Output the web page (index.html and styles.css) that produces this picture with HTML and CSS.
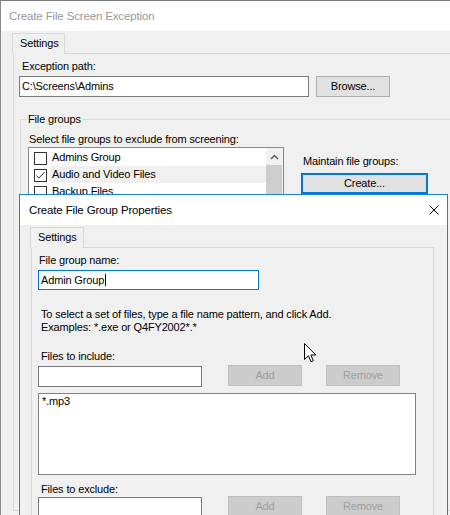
FILE: index.html
```html
<!DOCTYPE html>
<html>
<head>
<meta charset="utf-8">
<title>Create File Screen Exception</title>
<link rel="stylesheet" href="styles.css">
</head>
<body>
<div class="win back">
  <div class="titlebar">Create File Screen Exception</div>
  <div class="tabstrip"><div class="tab">Settings</div></div>
  <div class="panel back-panel">
    <div class="lbl path-lbl">Exception path:</div>
    <div class="path-row">
      <div class="textbox path-box">C:\Screens\Admins</div>
      <div class="btn browse">Browse...</div>
    </div>
    <div class="group">
      <div class="legend">File groups</div>
      <div class="lbl select-lbl">Select file groups to exclude from screening:</div>
      <div class="groups-row">
        <div class="listbox groups-list">
          <div class="items">
            <div class="item"><span class="check"></span><span class="item-text">Admins Group</span></div>
            <div class="item sel"><span class="check"><svg width="11" height="11" viewBox="0 0 11 11"><path d="M1.5 5.5 L4 8 L9.5 2" fill="none" stroke="#333" stroke-width="1"/></svg></span><span class="item-text">Audio and Video Files</span></div>
            <div class="item"><span class="check"></span><span class="item-text">Backup Files</span></div>
          </div>
          <div class="scrollbar">
            <div class="sb-arrow"><svg width="9" height="6" viewBox="0 0 9 6"><path d="M1 5 L4.5 1.5 L8 5" fill="none" stroke="#606060" stroke-width="1.5"/></svg></div>
            <div class="sb-thumb"></div>
          </div>
        </div>
        <div class="maintain">
          <div class="lbl">Maintain file groups:</div>
          <div class="btn create">Create...</div>
        </div>
      </div>
    </div>
  </div>
</div>

<div class="win dialog">
  <div class="titlebar">
    <span>Create File Group Properties</span>
    <svg class="close" width="10" height="10" viewBox="0 0 10 10"><path d="M0.5 0.5 L9.5 9.5 M9.5 0.5 L0.5 9.5" stroke="#000" stroke-width="1"/></svg>
  </div>
  <div class="tabstrip"><div class="tab">Settings</div></div>
  <div class="panel front-panel">
    <div class="lbl name-lbl">File group name:</div>
    <div class="textbox name-box">Admin Group<span class="caret"></span></div>
    <div class="lbl desc">To select a set of files, type a file name pattern, and click Add.<br>Examples: *.exe or Q4FY2002*.*</div>
    <div class="lbl inc-lbl">Files to include:</div>
    <div class="file-row">
      <div class="textbox file-box"></div>
      <div class="btn disabled add">Add</div>
      <div class="btn disabled remove">Remove</div>
    </div>
    <div class="listbox inc-list">*.mp3</div>
    <div class="lbl exc-lbl">Files to exclude:</div>
    <div class="file-row exc-row">
      <div class="textbox file-box"></div>
      <div class="btn disabled add">Add</div>
      <div class="btn disabled remove">Remove</div>
    </div>
  </div>
</div>

<svg class="cursor" width="13" height="20" viewBox="0 0 13 20"><path d="M0.5 0.5 L0.5 16.5 L4.5 12.8 L7 18.8 L9.3 17.8 L6.9 12 L11.8 12 Z" fill="#fff" stroke="#000" stroke-width="1" stroke-linejoin="miter"/></svg>
</body>
</html>
```

FILE: styles.css
```css
html, body {
  margin: 0;
  padding: 0;
}
body {
  width: 450px;
  height: 515px;
  overflow: hidden;
  position: relative;
  background: #f0f0f0;
  font-family: "Liberation Sans", Arial, sans-serif;
  font-size: 11px;
  letter-spacing: -0.15px;
  color: #000;
}
.back {
  width: 450px;
  height: 515px;
  box-sizing: border-box;
  border-top: 1px solid #7a7a7a;
  border-left: 1px solid #8a8a8a;
  background: #f0f0f0;
}
.titlebar {
  height: 30px;
  background: #fff;
  display: flex;
  align-items: center;
  justify-content: space-between;
  font-size: 11.5px;
  white-space: nowrap;
}
.back .titlebar {
  padding-left: 8px;
  color: #999;
}
.tabstrip {
  display: flex;
  padding-top: 2px;
}
.tab {
  position: relative;
  z-index: 1;
  box-sizing: border-box;
  height: 21px;
  margin-bottom: -1px;
  border: 1px solid #d9d9d9;
  border-bottom: none;
  background: #f0f0f0;
  padding: 1px 0 0 7px;
  line-height: 16px;
}
.back .tab {
  margin-left: 11px;
  width: 53px;
}
.panel {
  box-sizing: border-box;
  border: 1px solid #d9d9d9;
}
.back-panel {
  margin-left: 12px;
  height: 458px;
  border-right: none;
}
.lbl {
  line-height: 13px;
  white-space: nowrap;
}
.path-lbl {
  margin: 6px 0 0 8px;
}
.path-row {
  display: flex;
  margin: 3px 0 0 5px;
}
.textbox {
  box-sizing: border-box;
  height: 21px;
  border: 1px solid #7a7a7a;
  background: #fff;
  padding: 0 2px;
  line-height: 18px;
  white-space: nowrap;
}
.path-box {
  width: 290px;
}
.btn {
  box-sizing: border-box;
  height: 21px;
  border: 1px solid #adadad;
  background: #e1e1e1;
  text-align: center;
  line-height: 19px;
  white-space: nowrap;
}
.browse {
  width: 74px;
  margin-left: 7px;
}
.group {
  margin: 22px 0 0 6px;
  border: 1px solid #dcdcdc;
  border-right: none;
  border-bottom: none;
  height: 300px;
}
.legend {
  display: block;
  width: max-content;
  margin: -7px 0 0 6px;
  padding: 0 1px;
  background: #f0f0f0;
  line-height: 13px;
}
.select-lbl {
  margin: 7px 0 0 8px;
}
.groups-row {
  display: flex;
  align-items: flex-start;
  margin: 1px 0 0 7px;
}
.listbox {
  box-sizing: border-box;
  border: 1px solid #828790;
  background: #fff;
}
.groups-list {
  width: 256px;
  height: 70px;
  display: flex;
}
.items {
  flex: 1;
  padding-top: 1px;
}
.item {
  display: flex;
  height: 17px;
  line-height: 17px;
  white-space: nowrap;
}
.check {
  flex: none;
  box-sizing: border-box;
  width: 13px;
  height: 13px;
  border: 1px solid #333;
  background: #fff;
  margin: 3px 0 0 5px;
  display: flex;
  align-items: center;
  justify-content: center;
}
.item-text {
  flex: 1;
  margin-left: 3px;
  padding-left: 2px;
}
.sel .item-text {
  background: #f0f0f0;
}
.scrollbar {
  width: 17px;
  background: #f0f0f0;
  display: flex;
  flex-direction: column;
}
.sb-arrow {
  height: 17px;
  display: flex;
  align-items: center;
  justify-content: center;
}
.sb-thumb {
  flex: 1;
  background: #cdcdcd;
  margin-right: 1px;
}
.maintain {
  margin-left: 17px;
}
.maintain .lbl {
  margin-top: 8px;
  padding-left: 2px;
}
.create {
  width: 127px;
  margin-top: 5px;
  border: 2px solid #0078d7;
  line-height: 17px;
}

.dialog {
  position: absolute;
  left: 19px;
  top: 194px;
  width: 429px;
  height: 321px;
  box-sizing: border-box;
  border: 1px solid #1883d7;
  border-bottom: none;
  background: #f0f0f0;
}
.dialog .titlebar {
  padding-left: 9px;
}
.close {
  margin-right: 8px;
}
.dialog .tab {
  margin-left: 10px;
  width: 54px;
}
.front-panel {
  margin-left: 11px;
  width: 403px;
  height: 268px;
  border-bottom: none;
}
.name-lbl {
  margin: 6px 0 0 7px;
}
.name-box {
  width: 221px;
  height: 20px;
  margin: 3px 0 0 6px;
  border-color: #0078d7;
  line-height: 18px;
}
.caret {
  display: inline-block;
  width: 1px;
  height: 12px;
  margin-left: 1px;
  background: #000;
  vertical-align: -2px;
}
.desc {
  margin: 18px 0 0 9px;
}
.inc-lbl {
  margin: 16px 0 0 9px;
}
.file-row {
  display: flex;
  align-items: flex-start;
  height: 22px;
  margin: 2px 0 0 6px;
}
.exc-row {
  margin-top: 0;
  height: 19px;
}
.file-box {
  width: 164px;
  margin-top: 1px;
}
.exc-row .file-box {
  height: 18px;
  border-bottom: none;
}
.exc-row .btn {
  height: 19px;
  border-bottom: none;
}
.disabled {
  background: #cccccc;
  border-color: #bfbfbf;
  color: #a0a0a0;
}
.add {
  width: 74px;
  margin-left: 26px;
}
.remove {
  width: 74px;
  margin-left: 24px;
}
.inc-list {
  width: 378px;
  height: 82px;
  margin: 6px 0 0 6px;
  padding: 1px 0 0 3px;
  line-height: 13px;
  border-color: #828282;
}
.exc-lbl {
  margin: 8px 0 0 9px;
}
.cursor {
  position: absolute;
  left: 304px;
  top: 343px;
}
```
